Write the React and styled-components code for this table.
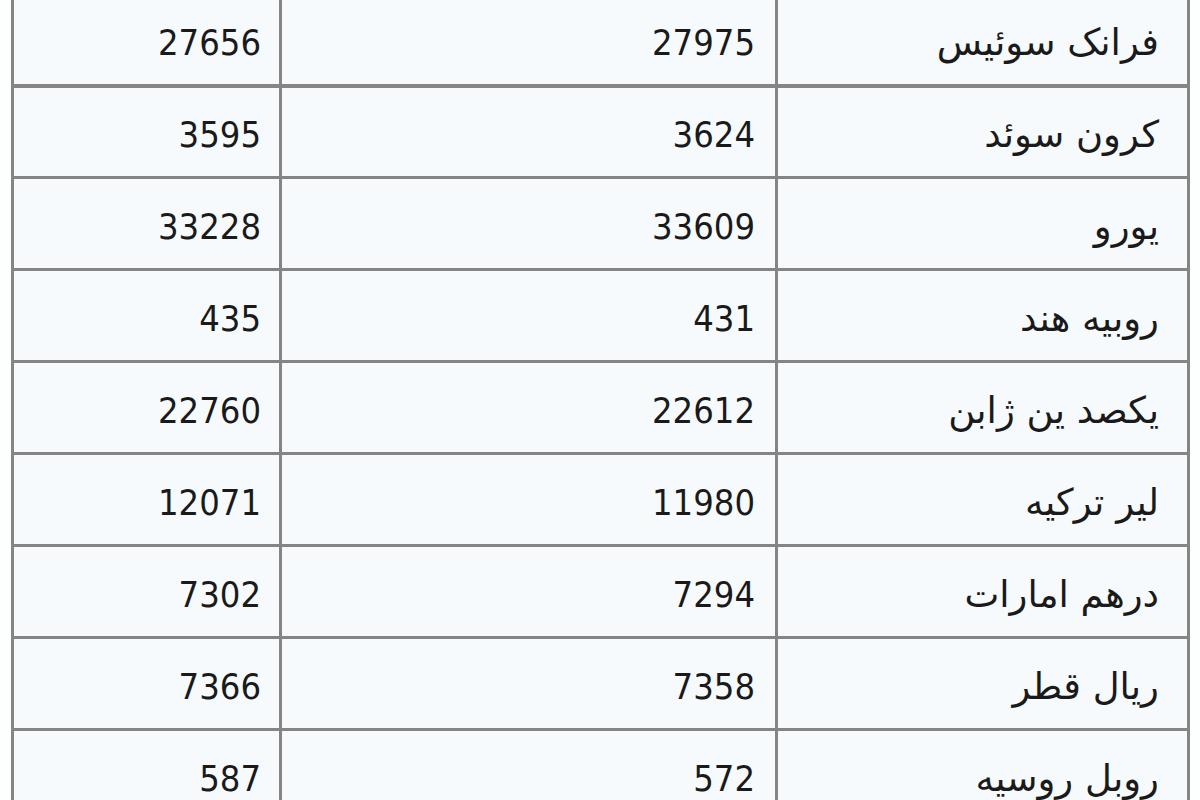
import React from "react";
import styled, { createGlobalStyle } from "styled-components";

const GlobalStyle = createGlobalStyle`
  html, body {
    margin: 0;
    padding: 0;
    background: #fdfefe;
    overflow: hidden;
  }
`;

const Page = styled.div`
  width: 1200px;
  height: 800px;
  overflow: hidden;
  padding: 0 11px 0 11px;
  box-sizing: border-box;
`;

const Table = styled.table`
  direction: rtl;
  width: 1178px;
  margin-top: -8px;
  border-collapse: collapse;
  table-layout: fixed;
  background-color: #f7fafd;
  font-family: "DejaVu Sans Condensed", "DejaVu Sans", sans-serif;
  font-size: 36px;
  color: #1a1a1a;
`;

const Row = styled.tr`
  height: 92px;
  &:first-child td {
    border-bottom-width: 4px;
  }
`;

const Cell = styled.td`
  border: 3px solid #858585;
  text-align: right;
  padding: 6px ${(p) => p.$pad || 20}px 0 0;
  vertical-align: middle;
  white-space: nowrap;
`;

const NameCell = styled(Cell)`
  font-family: "DejaVu Sans", sans-serif;
  font-size: 37px;
`;

const rows = [
  ["فرانک سوئیس", "27975", "27656"],
  ["کرون سوئد", "3624", "3595"],
  ["یورو", "33609", "33228"],
  ["روبیه هند", "431", "435"],
  ["یکصد ین ژابن", "22612", "22760"],
  ["لیر ترکیه", "11980", "12071"],
  ["درهم امارات", "7294", "7302"],
  ["ریال قطر", "7358", "7366"],
  ["روبل روسیه", "572", "587"],
];

export default function App() {
  return (
    <>
      <GlobalStyle />
      <Page>
        <Table>
          <colgroup>
            <col style={{ width: 412 }} />
            <col style={{ width: 496 }} />
            <col style={{ width: 268 }} />
          </colgroup>
          <tbody>
            {rows.map(([name, buy, sell]) => (
              <Row key={name}>
                <NameCell $pad={28}>{name}</NameCell>
                <Cell>{buy}</Cell>
                <Cell $pad={18}>{sell}</Cell>
              </Row>
            ))}
          </tbody>
        </Table>
      </Page>
    </>
  );
}
